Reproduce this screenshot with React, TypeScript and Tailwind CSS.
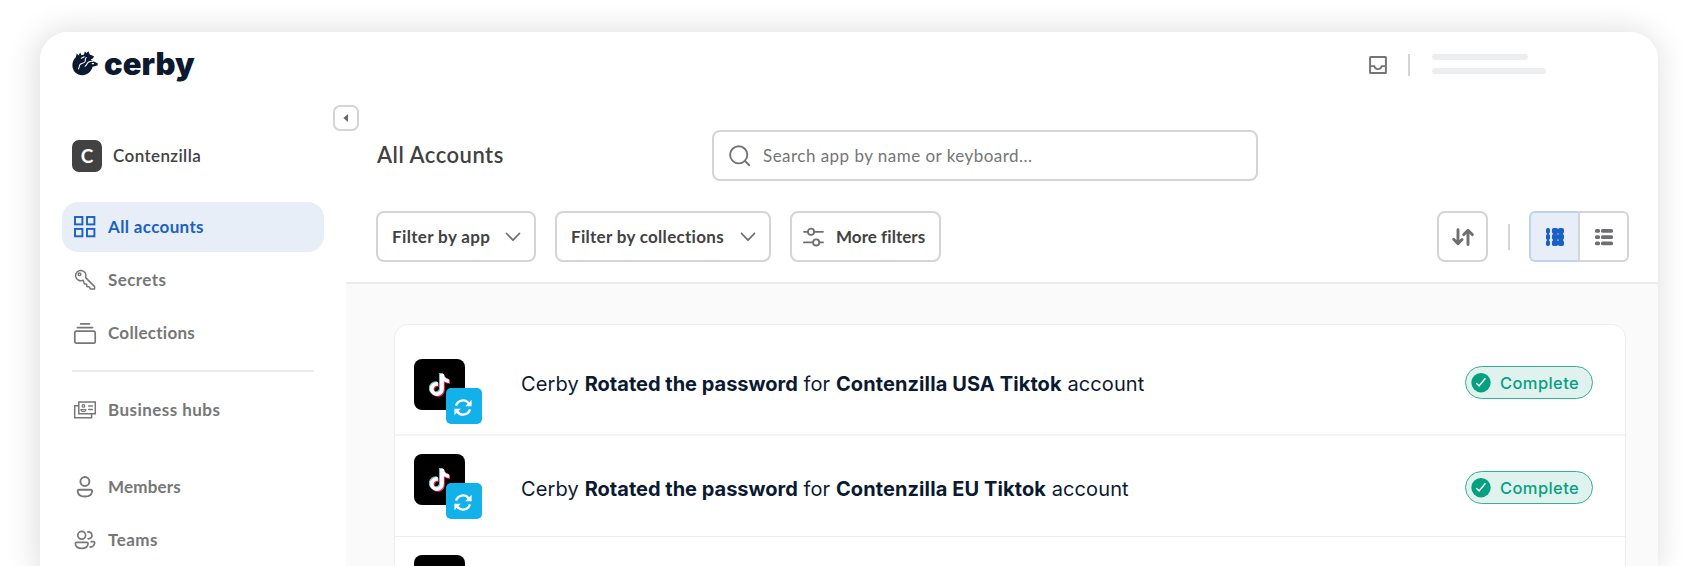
import type { ReactNode } from "react";

const LATO = "font-['Lato','Open_Sans',sans-serif] [font-variant-ligatures:none]";
const INTER = "font-['Inter','Liberation_Sans',sans-serif]";

function Logo() {
  return (
    <div className="flex items-center text-[#0b1a30]">
      <svg width="26" height="25" viewBox="0 0 26 25">
        <path
          fill="currentColor"
          d="M3.8 6.2 4.8 2.6 6.6 4.6 8.2 1.6 9.4 4.2 12 3.4 12.8.4 14.4 2 16.4.2 17.8 3.4 22 5.2 21 7.4 18.8 8.2 20 9.4 26 12.4 25.4 14.6 20.6 15.8C19.4 20.6 15.4 24.2 10.2 24.2 4.8 24.2.4 19.8.4 14.4.4 11.2 1.4 8.2 3.8 6.2Z"
        />
        <path
          fill="none"
          stroke="#fff"
          strokeWidth="1.1"
          strokeLinecap="round"
          strokeLinejoin="round"
          d="M6.400 17.800C7.800 16.200 6.800 14.600 8.400 13.200 10 12 12.400 12.400 13.200 10.400 13.800 8.800 12.400 8 14.200 6.600M13 15.200C14.800 14.800 14.600 12.200 16.600 11 18.200 10 19.600 10.200 21 10.400M9.400 7.200 12.200 5.800M20.200 12.600 21.600 12.600"
        />
      </svg>
      <span className={`${INTER} ml-1.5 pt-0.5 text-[31px] leading-8 font-black`}>cerby</span>
    </div>
  );
}

function Icon({ children }: { children: ReactNode }) {
  return (
    <svg
      width="22"
      height="22"
      viewBox="0 0 22 22"
      className="shrink-0 overflow-visible"
      fill="none"
      stroke="currentColor"
      strokeWidth="1.7"
      strokeLinecap="round"
      strokeLinejoin="round"
    >
      {children}
    </svg>
  );
}

const GridIcon = (
  <Icon>
    <g strokeWidth="1.9" strokeLinejoin="miter">
      <rect x="1" y="1" width="7.4" height="7.4" />
      <rect x="13" y="1" width="7.4" height="7.4" />
      <rect x="1" y="12.9" width="7.4" height="7.4" />
      <rect x="13" y="12.9" width="7.4" height="7.4" />
    </g>
  </Icon>
);
const KeyIcon = (
  <Icon>
    <g strokeWidth="1.5">
      <path d="M11.600 8.600 20.600 17.600V20.100H16.400L15.400 17.900 12.900 17.600 12.700 15.300 10.300 14.800 9.200 11.200A5.200 5.200 0 1 1 11.600 8.600Z" />
      <circle cx="5.5" cy="5.2" r="1.3" />
    </g>
  </Icon>
);
const CollectionsIcon = (
  <Icon>
    <rect x="0.8" y="9.2" width="20.4" height="12" rx="1.5" />
    <path d="M3.400 5.600H18.600M6.600 1.800H15.400" />
  </Icon>
);
const HubsIcon = (
  <Icon>
    <g strokeWidth="1.5" strokeLinejoin="miter">
      <path d="M4.800 3H21.300V14.700H4.800ZM4.500 6.700H.7V18.800H17.600V15" />
      <circle cx="9.400" cy="6.900" r="1.300" strokeWidth="1.200" />
      <path d="M6.900 10.500H11.900C12 13 6.800 13 6.900 10.500Z" strokeWidth="1.200" />
      <path d="M14.700 6.900H18.300M14.700 10.600H18.300" />
    </g>
  </Icon>
);
const MemberIcon = (
  <Icon>
    <g strokeWidth="1.9">
      <circle cx="10.9" cy="5.5" r="4.5" />
      <path d="M5.200 13.800H16.600Q18.300 13.800 18.100 15.500C17.800 18.800 15 20.500 10.900 20.500S4 18.800 3.700 15.500Q3.500 13.800 5.200 13.800Z" />
    </g>
  </Icon>
);
const TeamIcon = (
  <Icon>
    <circle cx="7.7" cy="6.3" r="3.9" />
    <path d="M2.800 13.300H12.600Q14.200 13.300 14 14.900C13.700 17.700 11.400 19.400 7.700 19.400S1.700 17.700 1.400 14.900Q1.200 13.300 2.800 13.300Z" />
    <path d="M13.900 2.900C16.200 3 17.900 4.500 17.900 6.500S16.200 9.700 14.100 9.800M17.200 12.700H19.400Q20.900 12.700 20.600 14.300C20.200 16.300 18.600 17.800 16.100 18.200" />
  </Icon>
);

function NavItem({ icon, label, className }: { icon: ReactNode; label: string; className: string }) {
  return (
    <div className={`flex h-[50px] items-center gap-3 rounded-2xl pl-3 text-[17px] font-bold ${className}`}>
      {icon}
      <span>{label}</span>
    </div>
  );
}

function Sidebar() {
  return (
    <aside className={`${LATO} flex w-[306px] shrink-0 flex-col px-[22px] text-[#777777]`}>
      <div className="ml-2.5 flex h-8 items-center text-[17px] font-semibold text-[#424242]">
        <span className="flex h-8 w-[30px] items-center justify-center rounded-[7px] bg-[#424242] text-[19px] font-bold text-white">C</span>
        <span className="ml-[11px] tracking-[0.4px]">Contenzilla</span>
      </div>
      <nav className="mt-[30px] flex flex-col gap-[3px]">
        <NavItem icon={GridIcon} label="All accounts" className="bg-[#e7eef8] tracking-[0.35px] text-[#1b60c4]" />
        <NavItem icon={KeyIcon} label="Secrets" className="tracking-[0.4px]" />
        <NavItem icon={CollectionsIcon} label="Collections" className="tracking-[0.28px]" />
      </nav>
      <div className="mx-2.5 mt-3 h-0.5 shrink-0 bg-[#ebebf0]" />
      <nav className="mt-[13px] flex flex-col">
        <NavItem icon={HubsIcon} label="Business hubs" className="tracking-[0.45px]" />
        <NavItem icon={MemberIcon} label="Members" className="mt-[27px] tracking-[0.2px]" />
        <NavItem icon={TeamIcon} label="Teams" className="mt-[3px] tracking-[0.5px]" />
      </nav>
    </aside>
  );
}

function Chevron() {
  return (
    <svg width="16" height="10" viewBox="0 0 16 10" fill="none" stroke="#6f6f6f" strokeWidth="1.8" strokeLinecap="round" strokeLinejoin="round">
      <path d="M1.600 1.500 8 8.200 14.400 1.500" />
    </svg>
  );
}

function Toolbar() {
  return (
    <div className="mt-[30px] flex h-[51px] items-center pr-[29px] pl-[30px] text-[17px] font-bold text-[#424242]">
      <button className="flex h-[51px] w-[160px] items-center justify-between rounded-lg border-2 border-[#d4d4d9] pr-[13px] pl-3.5 tracking-[0.36px]">
        Filter by app
        <Chevron />
      </button>
      <button className="ml-[19px] flex h-[51px] w-[216px] items-center justify-between rounded-lg border-2 border-[#d4d4d9] pr-[13px] pl-3.5 tracking-[0.3px]">
        Filter by collections
        <Chevron />
      </button>
      <button className="ml-[19px] flex h-[51px] w-[151px] items-center rounded-lg border-2 border-[#d4d4d9] pl-[11px] tracking-[0.05px]">
        <svg width="21" height="20" viewBox="0 0 21 20" fill="none" stroke="#6f6f6f" strokeWidth="1.8" strokeLinecap="round">
          <path d="M1 4.800H4.600M11.400 4.800H20M1 15.400H9.800M16.600 15.400H20" />
          <circle cx="8" cy="4.8" r="3.1" />
          <circle cx="13.2" cy="15.4" r="3.1" />
        </svg>
        <span className="ml-3">More filters</span>
      </button>
      <button className="ml-auto flex size-[51px] items-center justify-center rounded-lg border-2 border-[#d4d4d9]">
        <svg width="22" height="18" viewBox="0 0 22 18" fill="none" stroke="#6f6f71" strokeWidth="2.9" strokeLinecap="round" strokeLinejoin="round">
          <path d="M6 1.700V15.500M1.700 11.300 6 15.800 10 11.600M16 16.500V2.500M11.800 6.600 16 2.200 20.300 6.600" />
        </svg>
      </button>
      <div className="ml-5 h-[26px] w-0.5 bg-[#d4d4d9]" />
      <div className="ml-[19px] flex h-[51px]">
        <button className="flex h-[51px] w-[49px] items-center justify-center rounded-l-md border-2 border-r-0 border-[#bfd3f0] bg-[#e7eef8]">
          <svg width="18" height="18" viewBox="0 0 18 18" fill="#1b60c4">
            <path d="M1 2H3V16H1ZM7 1.500H17V16.500H7Z" />
            {[0, 6.1, 12.2].map((y) => (
              <g key={y}>
                <rect x="0" y={y} width="4" height="5.8" rx="1.7" />
                <rect x="5.9" y={y} width="6.2" height="5.8" rx="1.8" />
                <rect x="11.9" y={y} width="6.1" height="5.8" rx="1.8" />
              </g>
            ))}
            <g fill="#b9cef0">
              <circle cx="12" cy="6" r="0.8" />
              <circle cx="12" cy="12.1" r="0.8" />
            </g>
          </svg>
        </button>
        <button className="flex h-[51px] w-[51px] items-center justify-center rounded-r-md border-2 border-[#d4d4d9]">
          <svg width="18" height="18" viewBox="0 0 18 18" fill="#6f6f71">
            {[1, 7.2, 13.4].map((y) => (
              <g key={y}>
                <rect x="0" y={y} width="5" height="3.8" rx="1.5" />
                <rect x="6" y={y} width="12" height="3.8" rx="1.5" />
              </g>
            ))}
          </svg>
        </button>
      </div>
    </div>
  );
}

const NOTE =
  "M448,209.91a210.06,210.06,0,0,1-122.77-39.25V349.38A162.55,162.55,0,1,1,185,188.31V278.2a74.62,74.62,0,1,0,52.23,71.18V0l88,0a121.18,121.18,0,0,0,1.86,22.17h0A122.18,122.18,0,0,0,381,102.39a121.43,121.43,0,0,0,67,20.14Z";

function AppTile() {
  return (
    <div className="relative h-[66px] w-[69px] shrink-0">
      <div className="flex size-[51px] items-center justify-center rounded-lg bg-black">
        <svg width="21" height="24" viewBox="-20 -18 488 548">
          <path d={NOTE} fill="#69c9d0" transform="translate(-24 -20)" />
          <path d={NOTE} fill="#ee1d52" transform="translate(24 20)" />
          <path d={NOTE} fill="#fff" />
        </svg>
      </div>
      <div className="absolute top-[29px] left-8 flex size-9 items-center justify-center rounded-[5px] bg-[#12b1ea]">
        <svg width="18" height="17" viewBox="0 0 18 17" fill="none" stroke="#fff" strokeWidth="2.3" className="mt-0.5 mr-0.5">
          <path d="M2 6.600A7.200 7.200 0 0 1 14.700 4.300M16 10.400A7.200 7.200 0 0 1 3.300 12.700" />
          <path d="M17.600.8V7.200H11.200ZM.4 16.200V9.800H6.800Z" fill="#fff" stroke="none" />
        </svg>
      </div>
    </div>
  );
}

function Row({ target, className, metaClass }: { target: string; className: string; metaClass: string }) {
  return (
    <div className={`flex items-start pr-8 pl-[19px] ${className}`}>
      <AppTile />
      <div className={`flex h-[33px] grow items-center justify-between ${metaClass}`}>
        <p className={`${INTER} ml-[38px] pt-1 text-[20px] leading-[33px] tracking-[0.1px] whitespace-nowrap text-[#0b1a30]`}>
          <span className="tracking-[0.15px]">Cerby</span> <b className="font-bold tracking-normal">Rotated the password</b> for{" "}
          <b className="font-bold">{target}</b> account
        </p>
        <div className={`${INTER} flex h-[33px] w-[128px] items-center rounded-full border border-[#34b096] bg-[#e0f2ee] pl-[5px] text-[16.5px] font-medium tracking-[0.4px] text-[#04a082]`}>
          <svg width="20" height="20" viewBox="0 0 20 20" fill="none">
            <circle cx="10" cy="9.7" r="9.7" fill="#04a082" />
            <path d="M5.600 10.500 8.200 12.900 14 5.700" stroke="#fff" strokeWidth="1.5" strokeLinecap="round" strokeLinejoin="round" />
          </svg>
          <span className="ml-[9px] pt-0.5">Complete</span>
        </div>
      </div>
    </div>
  );
}

function Main() {
  return (
    <main className={`${LATO} relative flex grow flex-col`}>
      <button className="absolute -top-[35px] -left-[13px] flex size-[26px] items-center justify-center rounded-[7px] border-2 border-[#d4d4d9] bg-white">
        <svg width="5" height="8" viewBox="0 0 5 8" fill="#6a6a6a" className="mr-px">
          <path d="M5 0V8L.3 4Z" />
        </svg>
      </button>
      <div className="-mt-2.5 flex h-[51px] items-center pl-[30px]">
        <h1 className="w-[336px] pb-0.5 pl-px text-[22px] font-semibold tracking-[0.5px] text-[#424242]">All Accounts</h1>
        <div className="flex h-[51px] w-[546px] items-center rounded-lg border-2 border-[#d4d4d9] pl-[15px] text-[17px] tracking-[0.47px] text-[#757575]">
          <svg width="22" height="22" viewBox="0 0 22 22" fill="none" stroke="#757575" strokeWidth="1.9" strokeLinecap="round">
            <circle cx="9.7" cy="9.8" r="8.6" />
            <path d="M16 16 20.300 20.200" />
          </svg>
          <span className="ml-3">Search app by name or keyboard...</span>
        </div>
      </div>
      <Toolbar />
      <div className="mt-5 grow border-t-2 border-[#ebebf0] bg-[#fafafa] pt-10 pr-8 pl-12">
        <div className="h-[300px] rounded-t-[14px] border border-[#eeeeee] bg-white">
          <Row target="Contenzilla USA Tiktok" className="h-[111px] border-b-2 border-[#f4f4f4] pt-[34px]" metaClass="mt-[7px]" />
          <Row target="Contenzilla EU Tiktok" className="h-[101px] border-b border-[#ededed] pt-[18px]" metaClass="mt-[17px]" />
          <div className="pt-[18px] pl-[19px]">
            <AppTile />
          </div>
        </div>
      </div>
    </main>
  );
}

export default function App() {
  return (
    <div className="h-[566px] w-[1700px] overflow-hidden bg-white pt-8 pl-10">
      <div className="relative isolate w-[1618px]">
        <div className="absolute inset-x-0 top-0 -z-10 h-[548px] rounded-[28px] shadow-[-2px_1px_30px_3px_rgba(0,0,0,0.13)]" />
        <div className="flex h-[560px] flex-col overflow-hidden rounded-t-[28px] bg-white">
          <header className="flex h-[108px] shrink-0 items-start pt-3.5 pl-8">
            <Logo />
            <div className="mt-2 ml-auto flex h-[22px] w-[289px] items-center">
              <svg width="18" height="18" viewBox="0 0 18 18" fill="none" stroke="#757575" strokeWidth="2">
                <rect x="1.1" y="1.1" width="15.8" height="15.8" rx="0.5" />
                <path d="M1.500 10.200H5.300C5.800 14 12.200 14 12.700 10.200H16.500" strokeWidth="1.8" />
              </svg>
              <div className="ml-[21px] h-[22px] w-0.5 bg-[#d4d4d9]" />
              <div className="ml-[22px] flex flex-col gap-2 pb-0.5">
                <div className="h-1.5 w-24 rounded-full bg-[#edeef0]" />
                <div className="h-1.5 w-[114px] rounded-full bg-[#edeef0]" />
              </div>
            </div>
          </header>
          <div className="flex grow">
            <Sidebar />
            <Main />
          </div>
        </div>
      </div>
    </div>
  );
}
